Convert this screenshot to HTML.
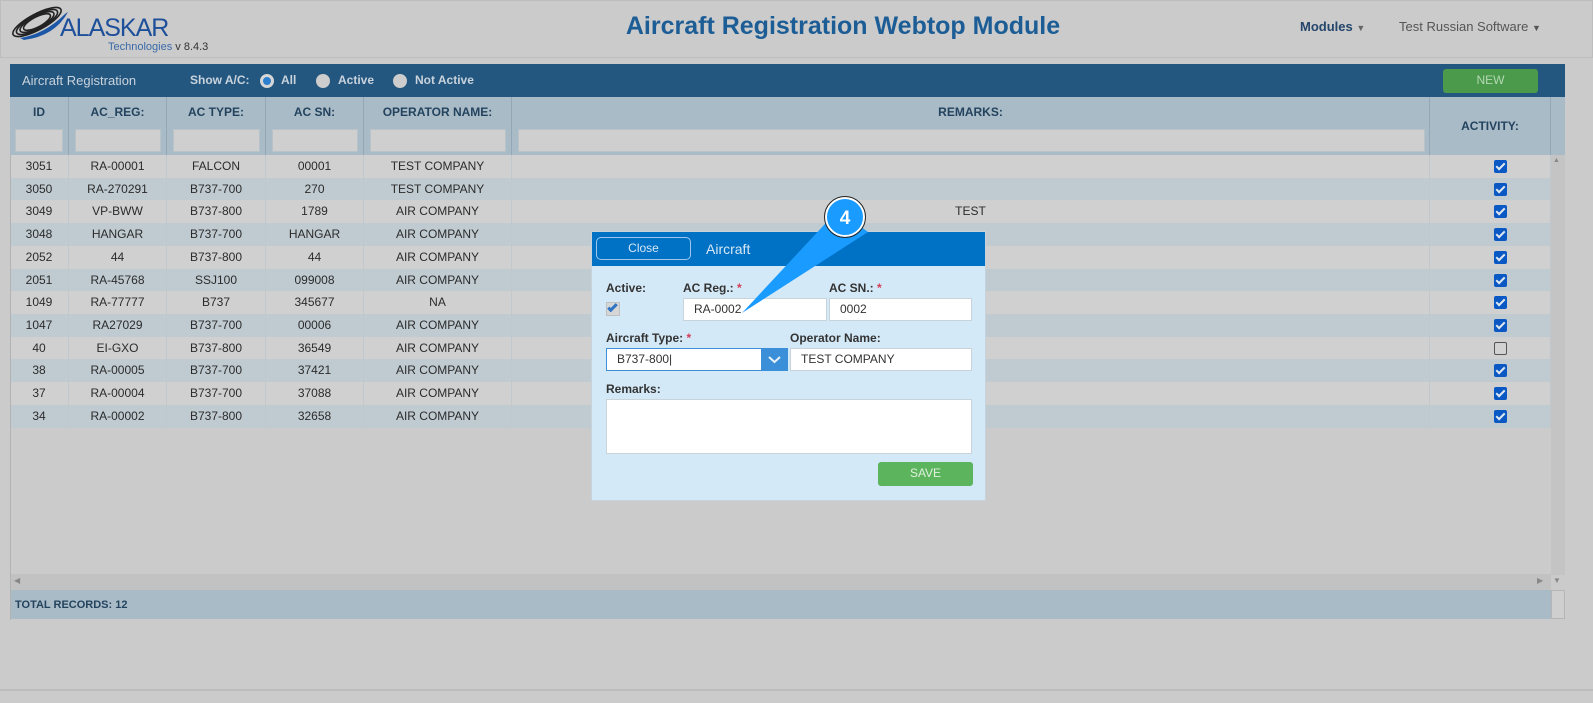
<!DOCTYPE html>
<html><head><meta charset="utf-8"><style>
*{box-sizing:border-box;margin:0;padding:0}
body{width:1593px;height:703px;background:#cbcbcb;font-family:"Liberation Sans",Arial,sans-serif;position:relative;overflow:hidden;font-size:12px;color:#222}
.a{position:absolute}
.hdr{left:0;top:0;width:1593px;height:58px;background:#cbcbcb;border:1px solid #bdbdbd}
.title{left:0;width:1686px;top:12px;text-align:center;font-size:25px;font-weight:bold;color:#1c5d96}
.bar{left:10px;top:64px;width:1555px;height:33px;background:#245780;color:#c9d3dc}
.th{background:#a9bbc7;top:97px;height:58px}
.col{position:absolute;border-right:1px solid #93a7b5;height:100%;top:0}
.lbl{position:absolute;top:8px;width:100%;text-align:center;font-weight:bold;color:#23435e;font-size:12px}
.flt{position:absolute;top:32px;height:23px;background:#cfcfcf;border:1px solid #b8c2c9}
.row{position:absolute;left:10px;width:1541px;height:23px}
.row div{position:absolute;top:0;height:23px;line-height:22px;text-align:center;font-size:12px;color:#2b2b2b;border-right:1px solid #c0c8cd}
.cb{position:absolute;width:13px;height:13px;border-radius:2px;background:#0a58c4;top:5px;left:1484px}
.cb::after{content:"";position:absolute;left:4px;top:1px;width:3px;height:7px;border:solid #e0e8f0;border-width:0 2px 2px 0;transform:rotate(45deg)}
.cb.off{background:#d2d2d2;border:1px solid #555}
.cb.off::after{display:none}
.modal{left:591px;top:231px;width:395px;height:270px;background:#d4e9f7;border:1px solid #c6d3dc}
.mh{left:0;top:0;width:393px;height:34px;background:#0072c6}
.ml{font-weight:bold;font-size:12px;color:#333}
.inp{background:#fff;border:1px solid #c9d3da;height:23px;line-height:21px;padding-left:10px;font-size:12px;color:#333}
.req{color:#d43c55}
</style></head><body>
<div class="a hdr"></div>
<svg class="a" style="left:10px;top:6px" width="60" height="36" viewBox="0 0 60 36">
<g fill="none" stroke="#222" stroke-width="1.6"><ellipse cx="27" cy="16" rx="27" ry="8" transform="rotate(-28 27 16)"/><ellipse cx="27" cy="16" rx="23" ry="7" transform="rotate(-28 27 16)"/><ellipse cx="27" cy="16" rx="19" ry="6" transform="rotate(-28 27 16)"/><ellipse cx="27" cy="16" rx="15" ry="5" transform="rotate(-28 27 16)"/></g>
<path d="M10 32 Q35 28 55 8 L58 6 Q45 30 14 34Z" fill="#1c56a6"/></svg>
<div class="a" style="left:60px;top:14px;font-size:25px;color:#1d4f9a;letter-spacing:-1px">ALASKAR</div>
<div class="a" style="left:108px;top:41px;font-size:11px;color:#3a6aa8">Technologies <span style="color:#333;font-size:11px">v 8.4.3</span></div>
<div class="a title">Aircraft Registration Webtop Module</div>
<div class="a" style="left:1300px;top:19px;font-size:13px;font-weight:bold;color:#24466b">Modules <span style="font-size:9px;color:#666">▼</span></div>
<div class="a" style="left:1399px;top:19px;font-size:13px;color:#555">Test Russian Software <span style="font-size:9px">▼</span></div>

<div class="a bar"></div>
<div class="a" style="left:22px;top:73px;font-size:13px;color:#c9d3dc">Aircraft Registration</div>
<div class="a" style="left:190px;top:73px;font-size:12px;font-weight:bold;color:#c9d3dc">Show A/C:</div>
<div class="a" style="left:260px;top:74px;width:14px;height:14px;border-radius:50%;background:#2d7fd0;border:3px solid #d6d6d6"></div>
<div class="a" style="left:281px;top:73px;font-weight:bold;color:#c9d3dc">All</div>
<div class="a" style="left:316px;top:74px;width:14px;height:14px;border-radius:50%;background:#cdcdcd"></div>
<div class="a" style="left:338px;top:73px;font-weight:bold;color:#c9d3dc">Active</div>
<div class="a" style="left:393px;top:74px;width:14px;height:14px;border-radius:50%;background:#cdcdcd"></div>
<div class="a" style="left:415px;top:73px;font-weight:bold;color:#c9d3dc">Not Active</div>
<div class="a" style="left:1443px;top:69px;width:95px;height:24px;background:#4b9a4b;border-radius:3px;color:#b5d8b5;text-align:center;line-height:22px;font-size:12px">NEW</div>

<div class="a th" style="left:10px;width:1555px">
<div class="col" style="left:0;width:59px"><div class="lbl">ID</div><div class="flt" style="left:5px;width:48px"></div></div>
<div class="col" style="left:59px;width:98px"><div class="lbl">AC_REG:</div><div class="flt" style="left:6px;width:86px"></div></div>
<div class="col" style="left:157px;width:99px"><div class="lbl">AC TYPE:</div><div class="flt" style="left:6px;width:87px"></div></div>
<div class="col" style="left:256px;width:98px"><div class="lbl">AC SN:</div><div class="flt" style="left:6px;width:86px"></div></div>
<div class="col" style="left:354px;width:148px"><div class="lbl">OPERATOR NAME:</div><div class="flt" style="left:6px;width:136px"></div></div>
<div class="col" style="left:502px;width:918px"><div class="lbl">REMARKS:</div><div class="flt" style="left:6px;width:907px"></div></div>
<div class="col" style="left:1420px;width:121px"><div class="lbl" style="top:22px">ACTIVITY:</div></div>
</div>
<div class="a" style="left:1551px;top:155px;width:14px;height:420px;background:#c4c4c4"></div>
<div class="a" style="left:1553px;top:157px;font-size:7px;color:#888">▲</div>

<div id="rows"></div>
<div class="a" style="left:10px;top:574px;width:1541px;height:16px;background:#c2c2c2"></div>
<div class="a" style="left:14px;top:576px;font-size:8px;color:#888">◀</div>
<div class="a" style="left:1537px;top:576px;font-size:8px;color:#888">▶</div>
<div class="a" style="left:1553px;top:576px;font-size:8px;color:#888">▼</div>
<div class="a" style="left:10px;top:590px;width:1541px;height:29px;background:#a9bbc7"></div>
<div class="a" style="left:1551px;top:590px;width:14px;height:29px;background:#cfcfcf;border:1px solid #b5b5b5"></div>
<div class="a" style="left:15px;top:599px;font-size:11px;font-weight:bold;color:#23435e">TOTAL RECORDS: 12</div>
<div class="a" style="left:10px;top:155px;width:1px;height:465px;background:#b3b3b3"></div>
<div class="a" style="left:0;top:689px;width:1593px;height:2px;background:#bdbdbd"></div>

<div class="a modal">
<div class="a mh"></div>
<div class="a" style="left:4px;top:5px;width:95px;height:23px;border:1px solid #9fc6ea;border-radius:5px;color:#d7e7f5;text-align:center;line-height:20px;font-size:12px">Close</div>
<div class="a" style="left:114px;top:9px;color:#d7e7f5;font-size:14px">Aircraft</div>
<div class="a ml" style="left:14px;top:49px">Active:</div>
<div class="a" style="left:14px;top:70px;width:14px;height:14px;background:#d6d6d6;border:1px solid #c0c0c0"></div>
<div class="a" style="left:18px;top:70px;width:5px;height:10px;border:solid #2d74c4;border-width:0 3px 3px 0;transform:rotate(45deg)"></div>
<div class="a ml" style="left:91px;top:49px">AC Reg.: <span class="req">*</span></div>
<div class="a inp" style="left:91px;top:66px;width:144px">RA-0002</div>
<div class="a ml" style="left:237px;top:49px">AC SN.: <span class="req">*</span></div>
<div class="a inp" style="left:237px;top:66px;width:143px">0002</div>
<div class="a ml" style="left:14px;top:99px">Aircraft Type: <span class="req">*</span></div>
<div class="a inp" style="left:14px;top:116px;width:156px;border-color:#3d8fd6">B737-800|</div>
<div class="a" style="left:169px;top:116px;width:27px;height:23px;background:#3a8fd8"><svg width="27" height="23"><path d="M8 9 L13.5 14 L19 9" fill="none" stroke="#e8f2fb" stroke-width="2"/></svg></div>
<div class="a ml" style="left:198px;top:99px">Operator Name:</div>
<div class="a inp" style="left:198px;top:116px;width:182px">TEST COMPANY</div>
<div class="a ml" style="left:14px;top:150px">Remarks:</div>
<div class="a" style="left:14px;top:167px;width:366px;height:55px;background:#fff;border:1px solid #c9d3da"></div>
<div class="a" style="left:286px;top:230px;width:95px;height:24px;background:#5cb55c;border-radius:3px;color:#dff0df;text-align:center;line-height:22px;font-size:12px">SAVE</div>
</div>

<svg class="a" style="left:0;top:0" width="1593" height="703">
<path d="M838 210 L742 313 L868 232 Z" fill="#1a9bff"/>
<circle cx="845" cy="217" r="19" fill="#1a9bff" stroke="#fff" stroke-width="2"/>
<circle cx="845" cy="217" r="20.5" fill="none" stroke="#222" stroke-width="1"/>
<text x="845" y="224" text-anchor="middle" font-family="Liberation Sans" font-weight="bold" font-size="19" fill="#fff">4</text>
</svg>

<script>
var d=[["3051","RA-00001","FALCON","00001","TEST COMPANY","",1],["3050","RA-270291","B737-700","270","TEST COMPANY","",1],["3049","VP-BWW","B737-800","1789","AIR COMPANY","TEST",1],["3048","HANGAR","B737-700","HANGAR","AIR COMPANY","",1],["2052","44","B737-800","44","AIR COMPANY","",1],["2051","RA-45768","SSJ100","099008","AIR COMPANY","",1],["1049","RA-77777","B737","345677","NA","",1],["1047","RA27029","B737-700","00006","AIR COMPANY","",1],["40","EI-GXO","B737-800","36549","AIR COMPANY","",0],["38","RA-00005","B737-700","37421","AIR COMPANY","",1],["37","RA-00004","B737-700","37088","AIR COMPANY","",1],["34","RA-00002","B737-800","32658","AIR COMPANY","",1]];
var L=[[0,59],[59,98],[157,99],[256,98],[354,148],[502,918]],h="";
d.forEach(function(r,i){var t=155+i*22.7;h+='<div class="row" style="top:'+t+'px;background:'+(i%2?'#c0cbd1':'#d0d0d0')+'">';
for(var j=0;j<6;j++)h+='<div style="left:'+L[j][0]+'px;width:'+L[j][1]+'px">'+r[j]+'</div>';
h+='<div style="left:1420px;width:121px"></div><span class="cb'+(r[6]?'':' off')+'"></span></div>';});
document.getElementById("rows").innerHTML=h;
</script>
</body></html>
